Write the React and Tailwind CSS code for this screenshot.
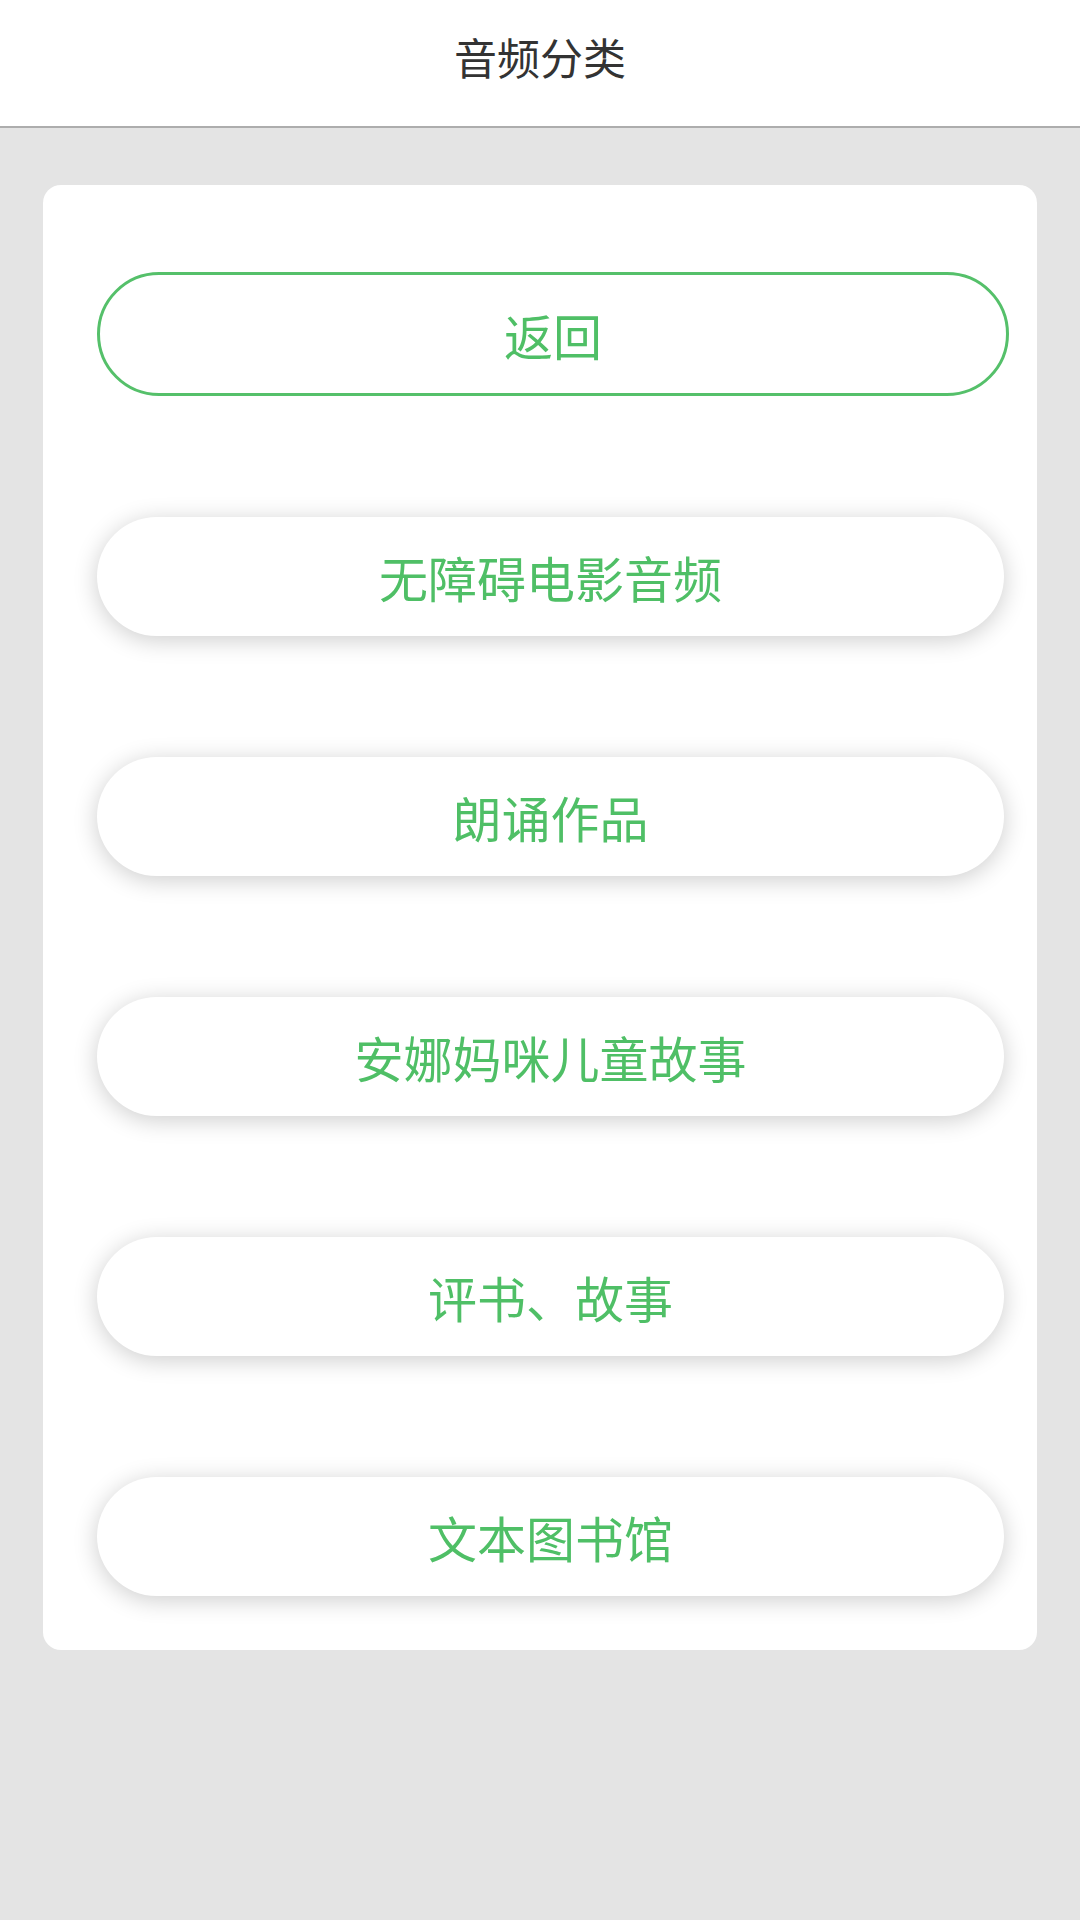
import React from "react";

const items = ["无障碍电影音频", "朗诵作品", "安娜妈咪儿童故事", "评书、故事", "文本图书馆"];

export default function App() {
  return (
    <div
      className="min-h-[1920px] w-[1080px] bg-[#e4e4e4]"
      style={{ fontFamily: '"Noto Sans CJK SC", "Noto Sans", sans-serif' }}
    >
      <header className="h-[128px] bg-white border-b-2 border-[#adadad] flex items-center justify-center">
        <h1 className="text-[43px] leading-none text-[#333333] font-normal -mt-[13px]">音频分类</h1>
      </header>
      <main className="mx-[43px] mt-[57px] bg-white rounded-[18px] pt-[87px] pb-[54px] pl-[54px] pr-[28px]">
        <button className="w-[912px] h-[124px] rounded-full border-[3px] border-[#55c06a] bg-white text-[49px] font-normal leading-none text-[#4fbf66] flex items-center justify-center">
          返回
        </button>
        <div className="mt-[121px] flex flex-col gap-[121px]">
          {items.map((t) => (
            <button
              key={t}
              className="w-[907px] h-[119px] rounded-full bg-white shadow-[0_4px_24px_rgba(0,0,0,0.2)] text-[49px] font-normal leading-none text-[#4fbf66] flex items-center justify-center"
            >
              {t}
            </button>
          ))}
        </div>
      </main>
    </div>
  );
}
